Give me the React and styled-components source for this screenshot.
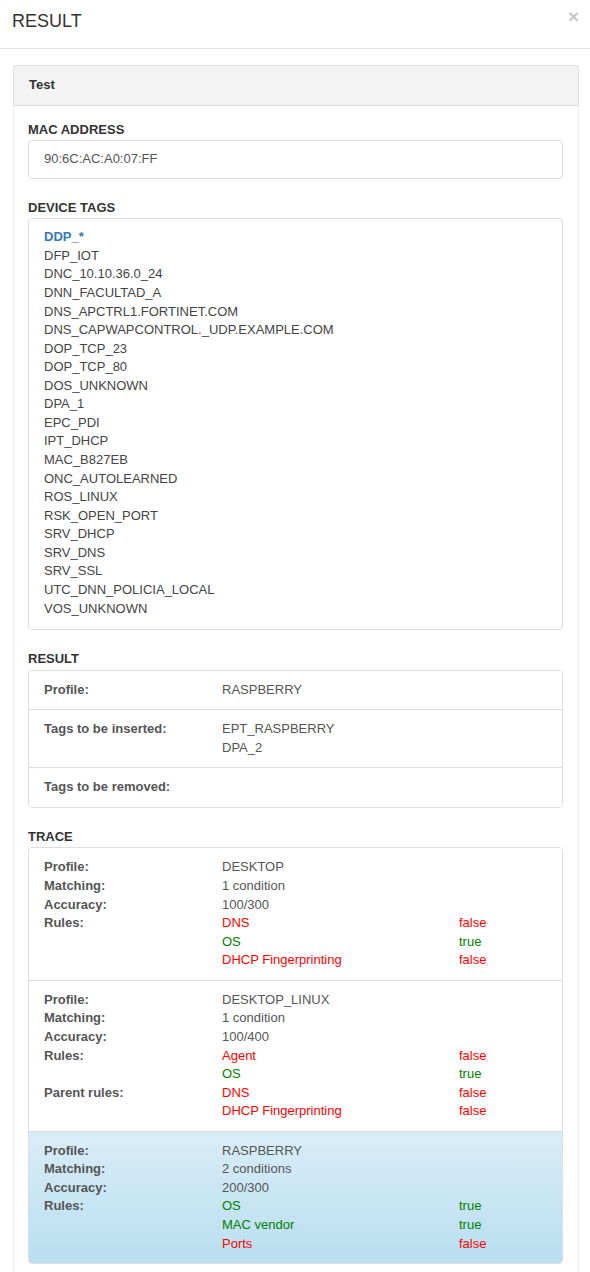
import React from 'react';
import styled, { createGlobalStyle } from 'styled-components';

const GlobalStyle = createGlobalStyle`
    html, body {
        margin: 0;
        padding: 0;
        background: #fff;
    }
    body {
        font-family: "Liberation Sans", Arial, Helvetica, sans-serif;
        font-size: 13px;
        line-height: 1.42857;
        color: #333;
    }
`;

const ModalHeader = styled.div`
    display: flex;
    align-items: center;
    justify-content: space-between;
    height: 48px;
    padding: 0 11px 0 12px;
    border-bottom: 1px solid #e5e5e5;
`;

const Title = styled.h4`
    margin: 0;
    font-size: 18px;
    font-weight: 400;
    color: #333;
    line-height: 1.42857;
    padding-bottom: 5px;
`;

const Close = styled.button`
    border: 0;
    background: none;
    padding: 0;
    font-family: "Liberation Sans", Arial, sans-serif;
    font-size: 19px;
    font-weight: 700;
    line-height: 1;
    color: #000;
    opacity: 0.22;
    margin-bottom: 15px;
    cursor: pointer;
`;

const ModalBody = styled.div`
    padding: 16px 11px 0 13px;
`;

const Panel = styled.div`
    border: 1px solid #eee;
    border-bottom: 0;
    border-radius: 4px 4px 0 0;
`;

const PanelHeading = styled.div`
    padding: 10px 15px;
    background: #f3f3f3;
    border: 1px solid #ddd;
    margin: -1px -1px 0;
    border-radius: 3px 3px 0 0;
    font-weight: 700;
    color: #333;
`;

const PanelBody = styled.div`
    padding: 15px 15px 10px 14px;
`;

const Group = styled.div`
    margin-bottom: 20px;
`;

const Label = styled.div`
    font-weight: 700;
    text-transform: uppercase;
    color: #333;
    margin-bottom: 1px;
`;

const Box = styled.div`
    border: 1px solid #ddd;
    border-radius: 4px;
    padding: ${p => p.$pad || '9px 15px 10px'};
    color: #555;
`;

const Tag = styled.div`
    color: ${p => (p.$active ? '#337ab7' : '#444')};
    font-weight: ${p => (p.$active ? 700 : 400)};
`;

const List = styled.div`
    border: 1px solid #ddd;
    border-radius: 4px;
    overflow: hidden;
`;

const Item = styled.div`
    padding: 10px 15px;
    border-top: ${p => (p.$first ? '0' : '1px solid #ddd')};
    background: ${p => (p.$info ? 'linear-gradient(to bottom, #d9edf7 0%, #b9def0 100%)' : '#fff')};
`;

const Row = styled.div`
    display: grid;
    grid-template-columns: 178px 237px 1fr;
`;

const Key = styled.div`
    font-weight: 700;
    color: #555;
`;

const Val = styled.div`
    color: ${p => (p.$ok === undefined ? '#555' : p.$ok ? '#008000' : '#f00')};
    grid-column: ${p => p.$span ? 'span 2' : 'auto'};
`;

const tags = [
    'DFP_IOT', 'DNC_10.10.36.0_24', 'DNN_FACULTAD_A', 'DNS_APCTRL1.FORTINET.COM',
    'DNS_CAPWAPCONTROL._UDP.EXAMPLE.COM', 'DOP_TCP_23', 'DOP_TCP_80', 'DOS_UNKNOWN',
    'DPA_1', 'EPC_PDI', 'IPT_DHCP', 'MAC_B827EB', 'ONC_AUTOLEARNED', 'ROS_LINUX',
    'RSK_OPEN_PORT', 'SRV_DHCP', 'SRV_DNS', 'SRV_SSL', 'UTC_DNN_POLICIA_LOCAL', 'VOS_UNKNOWN',
];

const traces = [
    {
        profile: 'DESKTOP', matching: '1 condition', accuracy: '100/300',
        rules: [['DNS', false], ['OS', true], ['DHCP Fingerprinting', false]],
    },
    {
        profile: 'DESKTOP_LINUX', matching: '1 condition', accuracy: '100/400',
        rules: [['Agent', false], ['OS', true]],
        parent: [['DNS', false], ['DHCP Fingerprinting', false]],
    },
    {
        profile: 'RASPBERRY', matching: '2 conditions', accuracy: '200/300', info: true,
        rules: [['OS', true], ['MAC vendor', true], ['Ports', false]],
    },
];

const Rules = ({ title, rules }) => (
    <>
        {rules.map(([name, ok], i) => (
            <Row key={name + i}>
                <Key>{i === 0 ? title : ''}</Key>
                <Val $ok={ok}>{name}</Val>
                <Val $ok={ok}>{ok ? 'true' : 'false'}</Val>
            </Row>
        ))}
    </>
);

const Line = ({ k, children }) => (
    <Row>
        <Key>{k}</Key>
        <Val $span>{children}</Val>
    </Row>
);

const App = () => {
    return (
        <>
            <GlobalStyle />
            <ModalHeader>
                <Title>RESULT</Title>
                <Close aria-label="close">×</Close>
            </ModalHeader>
            <ModalBody>
                <Panel>
                    <PanelHeading>Test</PanelHeading>
                    <PanelBody>
                        <Group>
                            <Label>MAC Address</Label>
                            <Box $pad="9px 15px">90:6C:AC:A0:07:FF</Box>
                        </Group>
                        <Group>
                            <Label>Device tags</Label>
                            <Box $pad="9px 15px 11px">
                                <Tag $active>DDP_*</Tag>
                                {tags.map(t => <Tag key={t}>{t}</Tag>)}
                            </Box>
                        </Group>
                        <Group>
                            <Label>Result</Label>
                            <List>
                                <Item $first><Line k="Profile:">RASPBERRY</Line></Item>
                                <Item>
                                    <Line k="Tags to be inserted:">EPT_RASPBERRY<br />DPA_2</Line>
                                </Item>
                                <Item><Line k="Tags to be removed:" /></Item>
                            </List>
                        </Group>
                        <Group>
                            <Label>Trace</Label>
                            <List>
                                {traces.map((t, i) => (
                                    <Item key={t.profile} $first={i === 0} $info={t.info}>
                                        <Line k="Profile:">{t.profile}</Line>
                                        <Line k="Matching:">{t.matching}</Line>
                                        <Line k="Accuracy:">{t.accuracy}</Line>
                                        <Rules title="Rules:" rules={t.rules} />
                                        {t.parent && <Rules title="Parent rules:" rules={t.parent} />}
                                    </Item>
                                ))}
                            </List>
                        </Group>
                    </PanelBody>
                </Panel>
            </ModalBody>
        </>
    );
};

export default App;
